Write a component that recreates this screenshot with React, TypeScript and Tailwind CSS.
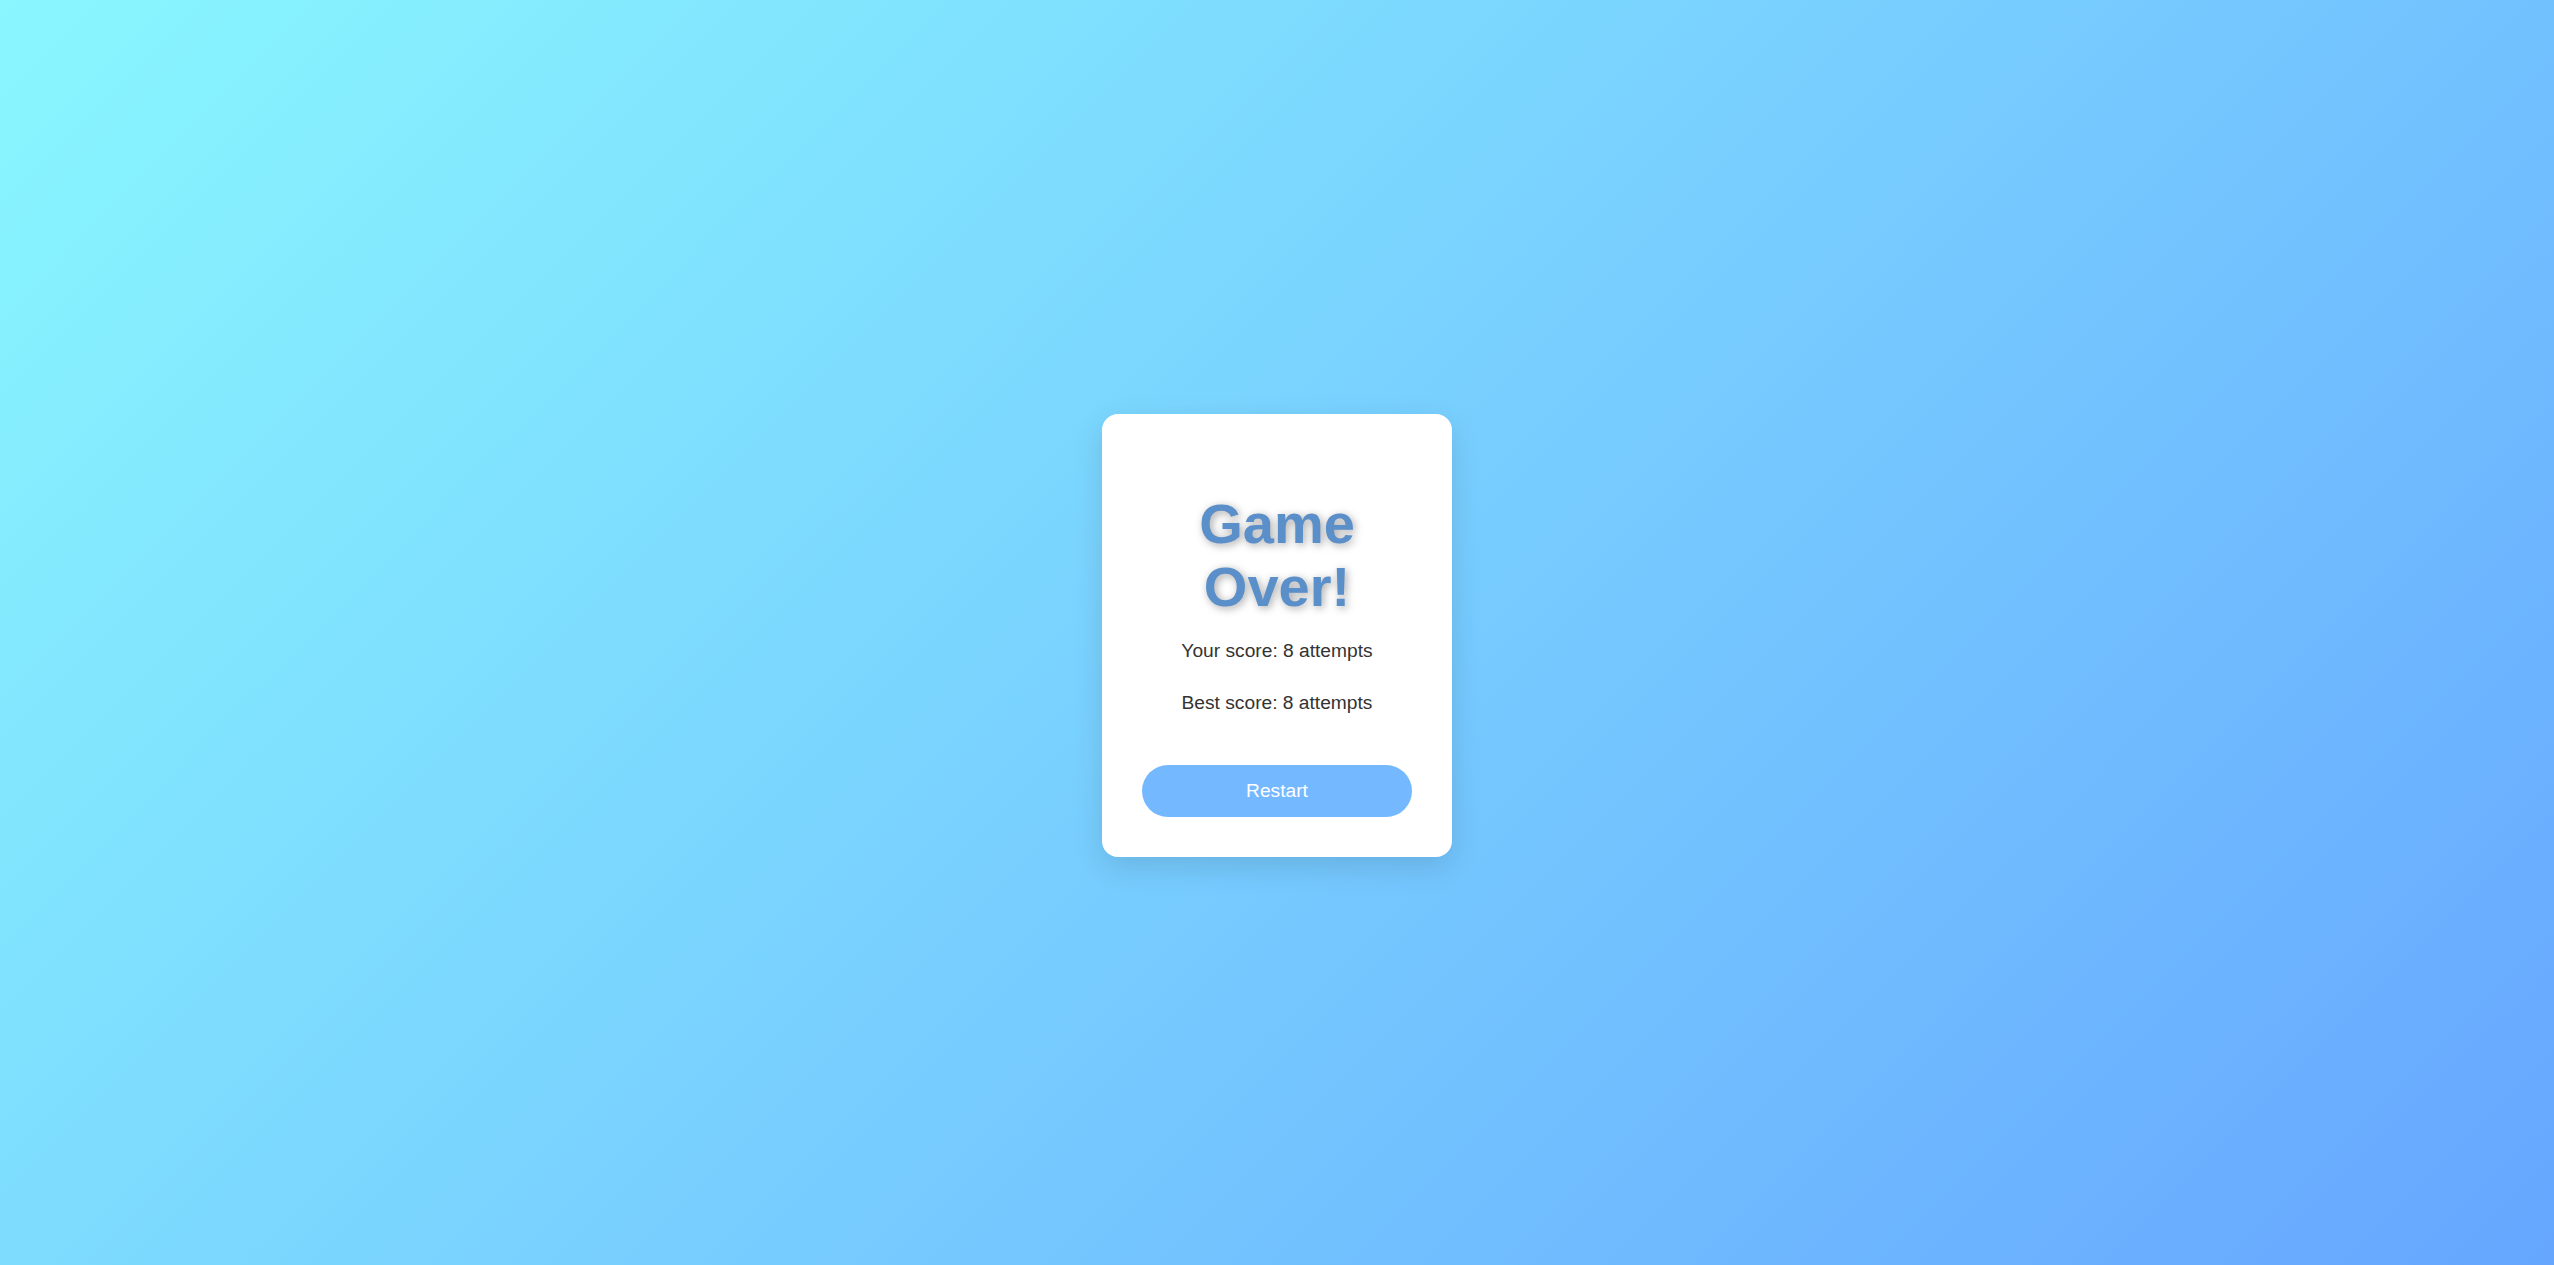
export default function App() {
    return (
        <div
            className="flex min-h-screen w-full items-center justify-center bg-[linear-gradient(135deg,#89f7fe,#66a6ff)]"
            style={{ fontFamily: '"Liberation Sans", Arial, sans-serif' }}
        >
            {/* Game over card */}
            <div className="mt-[6px] flex w-[350px] flex-col items-center rounded-[16px] bg-white px-10 pt-10 pb-10 text-center shadow-[0_10px_30px_rgba(0,0,0,0.12)]">
                <h1 className="mt-[39px] text-[56px] leading-[1.12] font-bold text-[#5a8fca] [text-shadow:2px_2px_8px_rgba(0,0,0,0.35)]">
                    Game Over!
                </h1>

                <p className="mt-[21px] text-[19.2px] leading-[1.15] text-[#333]">Your score: 8 attempts</p>
                <p className="mt-[30px] text-[19.2px] leading-[1.15] text-[#333]">Best score: 8 attempts</p>

                <button className="mt-[51px] h-[52px] w-full rounded-full bg-[#74b9ff] text-[19.2px] leading-[1.15] text-white">
                    Restart
                </button>
            </div>
        </div>
    );
}
